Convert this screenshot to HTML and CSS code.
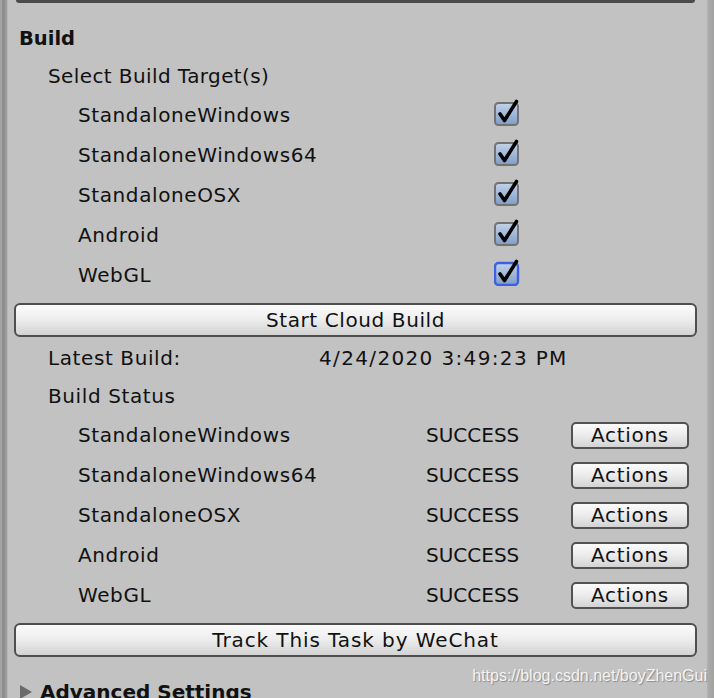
FILE: index.html
```html
<!DOCTYPE html>
<html>
<head>
<meta charset="utf-8">
<link rel="stylesheet" href="styles.css">
</head>
<body>
<div class="window">
  <div class="edge-left"></div>
  <div class="panel">
    <div class="prev-button"></div>
    <div class="heading">Build</div>
    <div class="sub select">Select Build Target(s)</div>

    <div class="target">
      <span>StandaloneWindows</span>
      <svg class="check" width="26" height="28" viewBox="0 0 26 28"><defs><linearGradient id="g1" x1="0" y1="0" x2="0" y2="1"><stop offset="0" stop-color="#c3d2e8"/><stop offset="1" stop-color="#7f9dc9"/></linearGradient></defs><rect x="1" y="5" width="23" height="22" rx="3.5" fill="url(#g1)" stroke="#727272" stroke-width="2"/><path d="M6 16 L10.5 22.5 L22.5 3.5" fill="none" stroke="#000" stroke-width="3.6" stroke-linecap="round" stroke-linejoin="round"/></svg>
    </div>
    <div class="target">
      <span>StandaloneWindows64</span>
      <svg class="check" width="26" height="28" viewBox="0 0 26 28"><rect x="1" y="5" width="23" height="22" rx="3.5" fill="url(#g1)" stroke="#727272" stroke-width="2"/><path d="M6 16 L10.5 22.5 L22.5 3.5" fill="none" stroke="#000" stroke-width="3.6" stroke-linecap="round" stroke-linejoin="round"/></svg>
    </div>
    <div class="target">
      <span>StandaloneOSX</span>
      <svg class="check" width="26" height="28" viewBox="0 0 26 28"><rect x="1" y="5" width="23" height="22" rx="3.5" fill="url(#g1)" stroke="#727272" stroke-width="2"/><path d="M6 16 L10.5 22.5 L22.5 3.5" fill="none" stroke="#000" stroke-width="3.6" stroke-linecap="round" stroke-linejoin="round"/></svg>
    </div>
    <div class="target">
      <span>Android</span>
      <svg class="check" width="26" height="28" viewBox="0 0 26 28"><rect x="1" y="5" width="23" height="22" rx="3.5" fill="url(#g1)" stroke="#727272" stroke-width="2"/><path d="M6 16 L10.5 22.5 L22.5 3.5" fill="none" stroke="#000" stroke-width="3.6" stroke-linecap="round" stroke-linejoin="round"/></svg>
    </div>
    <div class="target">
      <span>WebGL</span>
      <svg class="check" width="26" height="28" viewBox="0 0 26 28"><rect x="1" y="5" width="23" height="22" rx="3.5" fill="url(#g1)" stroke="#3d5fe3" stroke-width="2.4"/><path d="M6 16 L10.5 22.5 L22.5 3.5" fill="none" stroke="#000" stroke-width="3.6" stroke-linecap="round" stroke-linejoin="round"/></svg>
    </div>

    <div class="big-button first">Start Cloud Build</div>

    <div class="info"><span>Latest Build:</span><span class="date">4/24/2020 3:49:23 PM</span></div>
    <div class="sub status-title">Build Status</div>

    <div class="status"><span>StandaloneWindows</span><span class="ok">SUCCESS</span><span class="small-button">Actions</span></div>
    <div class="status"><span>StandaloneWindows64</span><span class="ok">SUCCESS</span><span class="small-button">Actions</span></div>
    <div class="status"><span>StandaloneOSX</span><span class="ok">SUCCESS</span><span class="small-button">Actions</span></div>
    <div class="status"><span>Android</span><span class="ok">SUCCESS</span><span class="small-button">Actions</span></div>
    <div class="status"><span>WebGL</span><span class="ok">SUCCESS</span><span class="small-button">Actions</span></div>

    <div class="big-button second">Track This Task by WeChat</div>

    <div class="foldout"><span class="tri"></span><span>Advanced Settings</span></div>
    <div class="watermark">https://blog.csdn.net/boyZhenGui</div>
  </div>
  <div class="edge-right"></div>
</div>
</body>
</html>
```
FILE: styles.css
```css
html, body {
  margin: 0;
  padding: 0;
  background: #c2c2c2;
  overflow: hidden;
}
.window {
  display: flex;
  width: 714px;
  height: 698px;
  overflow: hidden;
  font-family: "DejaVu Sans", sans-serif;
  font-size: 20px;
  letter-spacing: 0.6px;
  color: #111;
}
.edge-left {
  width: 8px;
  flex: none;
  background: linear-gradient(to right, #a4a4a4 0, #a4a4a4 2px, #8e8e8e 2px, #8e8e8e 5px, #9c9c9c 5px, #9c9c9c 7px, #b6b6b6 7px);
}
.edge-right {
  width: 7px;
  flex: none;
  background: linear-gradient(to right, #b4b4b4 0, #a9a9a9 2px, #a2a2a2 7px);
}
.panel {
  flex: 1;
  position: relative;
  background: #c2c2c2;
}
.prev-button {
  height: 3px;
  margin: 0 12px 0 8px;
  background: #4b4b4b;
  border-radius: 0 0 4px 4px;
}
.heading {
  margin-top: 18px;
  height: 36px;
  line-height: 36px;
  padding-left: 11px;
  font-weight: bold;
  font-size: 19.5px;
  letter-spacing: 0;
}
.sub {
  height: 38px;
  line-height: 38px;
  padding-left: 40px;
}
.select {
  letter-spacing: 0.4px;
}
.target {
  display: grid;
  grid-template-columns: 416px 26px;
  align-items: center;
  height: 40px;
  padding-left: 70px;
}
.target span {
  line-height: 40px;
}
.check {
  display: block;
  margin-top: -6px;
}
.big-button {
  box-sizing: border-box;
  height: 34px;
  margin: 8px 10px 0 6px;
  border: 2px solid #4f4f4f;
  border-radius: 6px;
  background: linear-gradient(to bottom, #fbfbfb 0%, #eeeeee 45%, #d3d3d3 100%);
  text-align: center;
  line-height: 30px;
}
.second {
  letter-spacing: 0.9px;
}
.info {
  display: grid;
  grid-template-columns: 271px auto;
  margin-top: 2px;
  height: 38px;
  line-height: 38px;
  padding-left: 40px;
}
.date {
  letter-spacing: 1.35px;
}
.status-title {
  height: 38px;
}
.status {
  display: grid;
  grid-template-columns: 348px 145px 118px;
  align-items: center;
  height: 40px;
  padding-left: 70px;
}
.ok {
  letter-spacing: 0;
}
.small-button {
  box-sizing: border-box;
  height: 27px;
  border: 2px solid #525252;
  border-radius: 5px;
  background: linear-gradient(to bottom, #fbfbfb 0%, #ededed 45%, #d3d3d3 100%);
  text-align: center;
  line-height: 23px;
  letter-spacing: 0.7px;
}
.foldout {
  display: flex;
  align-items: center;
  gap: 8px;
  margin-top: 15px;
  height: 40px;
  padding-left: 12px;
  font-weight: bold;
  letter-spacing: 0;
}
.tri {
  width: 0;
  height: 0;
  border-top: 7px solid transparent;
  border-bottom: 7px solid transparent;
  border-left: 12px solid #6a6a6a;
}
.watermark {
  position: absolute;
  right: 0;
  top: 667px;
  font-family: "Liberation Sans", sans-serif;
  font-size: 16px;
  letter-spacing: 0;
  color: #f4f4f4;
  text-shadow: 1px 1px 1px #8a8a8a;
}
```
